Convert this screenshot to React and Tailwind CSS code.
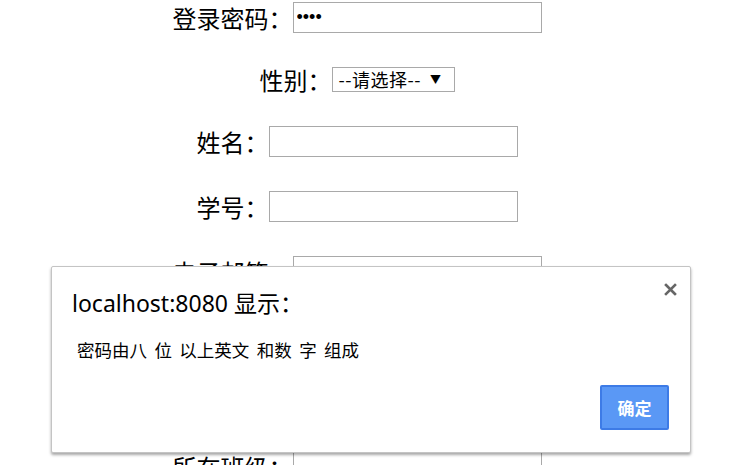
import { useState } from 'react';

const labelFont = { fontFamily: '"Noto Sans CJK SC", "Noto Sans", sans-serif' };

function Field({ label, type = 'text', value }) {
  return (
    <div className="flex items-center justify-center h-[31px]">
      <span className="text-[24px] leading-[31px] text-black" style={labelFont}>
        {label}
      </span>
      <input
        type={type}
        defaultValue={value}
        readOnly
        className="w-[249px] h-[31px] border border-[#a9a9a9] bg-white px-[3px] text-[18px] outline-none"
        style={{ fontFamily: '"Liberation Sans", Arial, sans-serif' }}
      />
    </div>
  );
}

export default function App() {
  const [open, setOpen] = useState(true);

  return (
    <div className="relative h-[465px] overflow-hidden bg-white" style={labelFont}>
      <div className="flex flex-col gap-[34px] pt-[2px] pr-[28px]">
        <Field label="登录密码：" value="••••" />
        <div className="flex items-center justify-center h-[25px]">
          <span className="text-[24px] leading-[25px]">性别：</span>
          <div className="flex items-start w-[123px] h-[25px] border border-[#a9a9a9] bg-white pl-[6px] gap-[9px]">
            <span className="text-[18px] leading-[23px] tracking-[0.5px]">--请选择--</span>
            <span className="text-[11px] leading-[20px] pt-[1px]">▼</span>
          </div>
        </div>
        <Field label="姓名：" />
        <Field label="学号：" />
        <Field label="电子邮箱：" />
        <Field label="手机号码：" />
        <Field label="出生日期：" />
        <Field label="所在班级：" />
      </div>

      {open && (
        <div className="absolute left-[51px] top-[266px] w-[640px] h-[187px] flex flex-col bg-white border border-[#c4c4c4] rounded-[2px] shadow-[0_2px_3px_rgba(0,0,0,0.35)] pt-[21px] pl-[20px] pr-[21px] pb-[22px]">
          <button
            className="absolute right-[13px] top-[16px] w-[13px] h-[13px]"
            onClick={() => setOpen(false)}
          >
            <svg width="13" height="13" viewBox="0 0 13 13">
              <path d="M2 2 L11 11 M11 2 L2 11" stroke="#666" strokeWidth="2.6" strokeLinecap="square" />
            </svg>
          </button>
          <div
            className="text-[23px] leading-[30px] text-black"
            style={{ fontFamily: '"Noto Sans", "Noto Sans CJK SC", sans-serif' }}
          >
            localhost:8080 显示：
          </div>
          <div className="mt-[20px] pl-[5px] text-[17.5px] leading-[24px] text-black [word-spacing:3.5px]">
            密码由八 位 以上英文 和数 字 组成
          </div>
          <div className="mt-auto flex justify-end">
            <button
              className="w-[69px] h-[45px] rounded-[2px] border-2 border-[#3d7be6] bg-[#5a98f5] text-white text-[17px] font-bold"
              onClick={() => setOpen(false)}
            >
              确定
            </button>
          </div>
        </div>
      )}
    </div>
  );
}
